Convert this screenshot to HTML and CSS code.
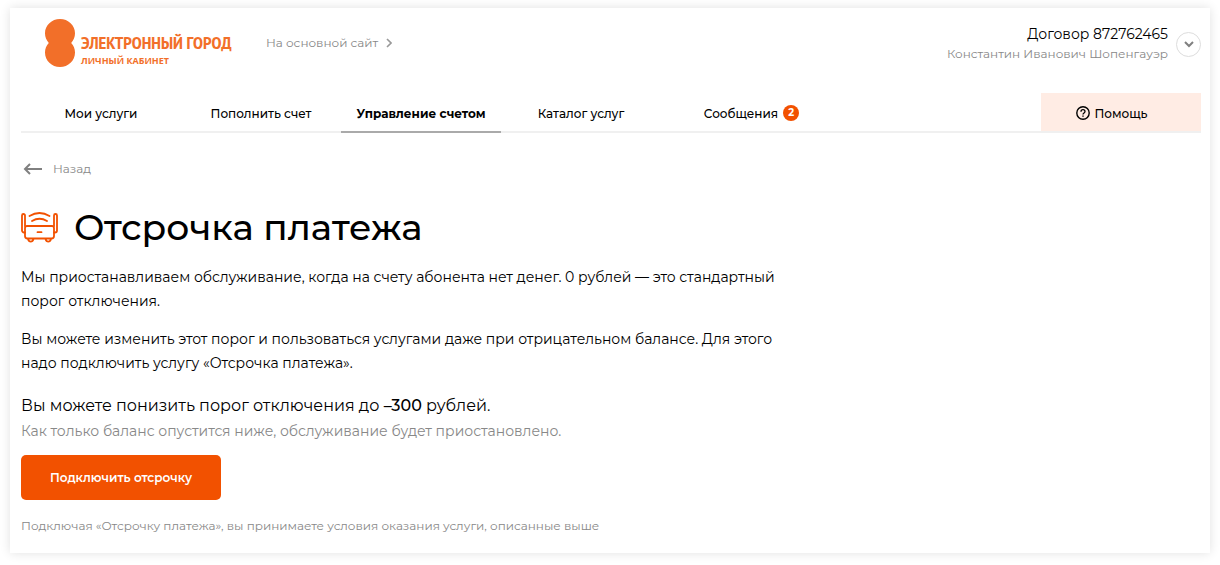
FILE: index.html
```html
<!DOCTYPE html>
<html lang="ru">
<head>
<meta charset="utf-8">
<meta name="viewport" content="width=device-width, initial-scale=1">
<title>Отсрочка платежа</title>
<link rel="stylesheet" href="styles.css">
</head>
<body>
<div class="card">
  <header class="header">
    <a class="logo" href="#">
      <svg class="logo-mark" viewBox="0 0 30 48" aria-hidden="true"><path d="M15 0C23.300 0 30 6.300 30 14.200C30 18 28.600 21.200 26.200 24C28.600 26.500 30 29.600 30 33.400C30 41.500 23.300 48 15 48S0 41.500 0 33.400C0 29.600 1.400 26.500 3.800 24C1.400 21.200 0 18 0 14.200C0 6.300 6.700 0 15 0Z" fill="#f26f29"/></svg>
      <span class="logo-text">
        <span class="logo-name">ЭЛЕКТРОННЫЙ ГОРОД</span>
        <span class="logo-sub">ЛИЧНЫЙ КАБИНЕТ</span>
      </span>
    </a>
    <a class="site-link" href="#">На основной сайт
      <svg width="6" height="10" viewBox="0 0 6 10" aria-hidden="true"><path d="M1 1l4 4-4 4" fill="none" stroke="#999" stroke-width="1.600"/></svg>
    </a>
    <div class="account">
      <div class="account-text">
        <div class="contract">Договор 872762465</div>
        <div class="owner">Константин Иванович Шопенгауэр</div>
      </div>
      <button class="account-toggle" type="button" aria-label="Меню договора">
        <svg width="10" height="7" viewBox="0 0 10 7" aria-hidden="true"><path d="M1 1l4 4 4-4" fill="none" stroke="#808080" stroke-width="2"/></svg>
      </button>
    </div>
  </header>
  <nav class="nav">
    <a class="tab" href="#">Мои услуги</a>
    <a class="tab" href="#">Пополнить счет</a>
    <a class="tab tab-active" href="#" aria-current="page">Управление счетом</a>
    <a class="tab" href="#">Каталог услуг</a>
    <a class="tab" href="#"><span class="tab-label">Сообщения<span class="badge">2</span></span></a>
    <a class="tab tab-help" href="#"><span class="tab-label">
      <svg class="help-icon" viewBox="0 0 14 14" aria-hidden="true"><circle cx="7" cy="7" r="6.200" fill="none" stroke="#000" stroke-width="1.400"/><path d="M5 5.700C5 4.500 5.900 3.700 7 3.700s2 .8 2 1.900C9 7 7 7.100 7 8.600" fill="none" stroke="#000" stroke-width="1.300"/><path d="M6.300 9.400h1.400v1.400H6.300z"/></svg>Помощь</span></a>
  </nav>
  <main class="content">
    <a class="back" href="#">
      <svg width="19" height="12" viewBox="0 0 19 12" aria-hidden="true"><path d="M19 6H2M7 1L2 6l5 5" fill="none" stroke="#808080" stroke-width="2"/></svg>
      Назад
    </a>
    <h1 class="title">
      <svg width="37" height="31" viewBox="0 0 37 31" aria-hidden="true"><g fill="none" stroke="#f25100" stroke-width="1.800" stroke-linecap="round" stroke-linejoin="round"><path d="M4 20.500H3a2 2 0 0 1-2-2V3.500a1.500 1.500 0 0 1 3 0V14M33 20.500h1a2 2 0 0 0 2-2V3.500a1.500 1.500 0 0 0-3 0V14"/><path d="M4 16a2 2 0 0 1 2-2h25a2 2 0 0 1 2 2v8a2.500 2.500 0 0 1-2.500 2.500h-24A2.500 2.500 0 0 1 4 24zM16.500 20.200h4M7 27c1 3.500 4.500 3.500 5.500 0M24.500 27c1 3.500 4.500 3.500 5.500 0"/><path d="M8.500 4Q18.500-2 28.500 4M11 9Q18.500 4.500 26 9"/></g></svg>
      Отсрочка платежа
    </h1>
    <p class="text">Мы приостанавливаем обслуживание, когда на счету абонента нет денег. 0 рублей — это стандартный порог отключения.</p>
    <p class="text">Вы можете изменить этот порог и пользоваться услугами даже при отрицательном балансе. Для этого надо подключить услугу «Отсрочка платежа».</p>
    <p class="limit">Вы можете понизить порог отключения до <strong>–300</strong> рублей.</p>
    <p class="hint">Как только баланс опустится ниже, обслуживание будет приостановлено.</p>
    <button class="submit" type="button">Подключить отсрочку</button>
    <p class="terms">Подключая «Отсрочку платежа», вы принимаете условия оказания услуги, описанные выше</p>
  </main>
</div>
</body>
</html>
```
FILE: styles.css
```css
* { box-sizing: border-box; }
body {
  margin: 0;
  padding: 8px 10px 12px;
  background: #fff;
  color: #000;
  font: 14px/24px Montserrat, Inter, sans-serif;
}
a { color: inherit; text-decoration: none; }
button { font: inherit; cursor: pointer; }
h1, p { margin: 0; }
svg { flex: none; }
.card {
  padding: 0 9px 15px 11px;
  background: #fff;
  box-shadow: 0 0 10px rgba(0, 0, 0, .12);
}
.header { display: flex; align-items: center; height: 70px; margin-bottom: 15px; }
.logo { display: flex; gap: 6px; align-items: center; width: 221px; padding-left: 24px; color: #f26f29; white-space: nowrap; }
.logo-mark { width: 30px; height: 48px; }
.logo-text { display: flex; flex-direction: column; padding-top: 15px; font-weight: 700; }
.logo-name { font-family: "PT Sans Narrow", "Fira Sans Condensed", "Roboto Condensed", "Open Sans Condensed", "Open Sans", sans-serif; font-size: 18px; line-height: 20px; }
.logo-sub { font-family: "Open Sans", sans-serif; font-size: 9px; line-height: 16px; }
.site-link { display: flex; align-items: center; gap: 8px; margin-left: 24px; color: #888; font-size: 12px; }
.account { display: flex; align-items: center; gap: 8px; margin: 2px 0 0 auto; text-align: right; }
.contract { font-size: 14px; line-height: 20px; }
.owner { color: #888; font-size: 12px; line-height: 20px; }
.account-toggle { display: flex; align-items: center; justify-content: center; width: 25px; height: 25px; padding: 0; border: 1px solid #ddd; border-radius: 50%; background: #fff; }
.nav { display: flex; height: 40px; font-size: 12px; font-weight: 500; white-space: nowrap; }
.tab { flex: 0 0 160px; border-bottom: 2px solid #f0f0f0; line-height: 42px; text-align: center; }
.nav::after { content: ""; flex: 1; order: 1; border-bottom: 2px solid #f0f0f0; }
.tab-active { border-color: #aaa; font-weight: 700; }
.tab-help { order: 2; background: #ffece4; }
.tab-label { position: relative; }
.badge { position: absolute; top: -1px; left: 100%; width: 16px; height: 16px; margin-left: 5px; border-radius: 50%; background: #f25100; color: #fff; font-size: 10px; font-weight: 700; line-height: 16px; }
.help-icon { position: absolute; top: 0; right: 100%; width: 14px; height: 14px; margin-right: 4px; }
.back { display: inline-flex; align-items: center; gap: 11px; margin-top: 24px; padding-left: 2px; color: #888; font-size: 12px; }
.title { display: flex; align-items: center; gap: 16px; margin: 21px 0 14px; font-size: 36px; font-weight: 500; line-height: 48px; }
.text { max-width: 770px; margin-bottom: 14px; }
.limit { padding-top: 4px; font-size: 16px; line-height: 26px; }
.limit strong { font-weight: 500; }
.hint { color: #888; }
.submit { display: block; width: 200px; height: 45px; margin: 12px 0 14px; padding: 0; border: 0; border-radius: 5px; background: #f25100; color: #fff; font-size: 12px; font-weight: 600; }
.terms { color: #888; font-size: 12px; }
```
